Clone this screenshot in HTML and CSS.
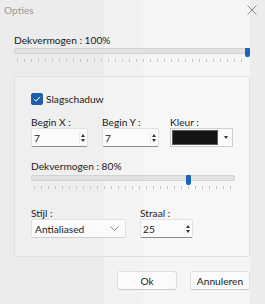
FILE: index.html
```html
<!DOCTYPE html>
<html lang="nl">
<head>
    <meta charset="UTF-8">
    <meta name="viewport" content="width=device-width, initial-scale=1.0">
    <title>Opties</title>
    <link rel="stylesheet" href="styles.css">
</head>
<body>

    <div class="window">
        <div class="titlebar">
            <span class="title">Opties</span>
            <svg class="close" width="10" height="10" viewBox="0 0 10 10">
                <path d="M0.5 0.5 L9.5 9.5 M9.5 0.5 L0.5 9.5" stroke="#8a8a8a" stroke-width="1" fill="none"/>
            </svg>
        </div>

        <div class="content">
            <div class="label">Dekvermogen : 100%</div>
            <div class="slider main-slider">
                <div class="track"></div>
                <div class="thumb" style="left: 100%"></div>
                <div class="ticks"></div>
            </div>

            <div class="group">
                <label class="check">
                    <span class="box">
                        <svg width="8" height="8" viewBox="0 0 8 8">
                            <path d="M1 4.2 L3 6.2 L7 1.8" stroke="#fff" stroke-width="1" fill="none"/>
                        </svg>
                    </span>
                    Slagschaduw
                </label>

                <div class="row">
                    <div class="field fx">
                        <div class="label">Begin X :</div>
                        <div class="spin w-spin">
                            <span class="value">7</span>
                            <span class="arrows"><i class="up"></i><i class="down"></i></span>
                        </div>
                    </div>
                    <div class="field fy">
                        <div class="label">Begin Y :</div>
                        <div class="spin w-spin">
                            <span class="value">7</span>
                            <span class="arrows"><i class="up"></i><i class="down"></i></span>
                        </div>
                    </div>
                    <div class="field">
                        <div class="label">Kleur :</div>
                        <div class="color-btn">
                            <span class="swatch"></span>
                            <i class="down"></i>
                        </div>
                    </div>
                </div>

                <div class="label sub-label">Dekvermogen : 80%</div>
                <div class="slider inner-slider">
                    <div class="track"></div>
                    <div class="thumb" style="left: 78.5%"></div>
                    <div class="ticks"></div>
                </div>

                <div class="row bottom-row">
                    <div class="field fs">
                        <div class="label">Stijl :</div>
                        <div class="combo">
                            <span class="value">Antialiased</span>
                            <svg width="9" height="5" viewBox="0 0 9 5">
                                <path d="M0.5 0.5 L4.5 4.5 L8.5 0.5" stroke="#8a8a8a" stroke-width="1" fill="none"/>
                            </svg>
                        </div>
                    </div>
                    <div class="field">
                        <div class="label">Straal :</div>
                        <div class="spin s-spin">
                            <span class="value">25</span>
                            <span class="arrows"><i class="up"></i><i class="down"></i></span>
                        </div>
                    </div>
                </div>
            </div>

            <div class="buttons">
                <button>Ok</button>
                <button>Annuleren</button>
            </div>
        </div>
    </div>

</body>
</html>
```

FILE: styles.css
```css
body {
    margin: 0;
    padding: 0;
    font-family: 'Lato', sans-serif;
    font-size: 10.2px;
    color: #1a1a1a;
}

.window {
    width: 265px;
    height: 304px;
    background-color: #ececec;
    background-image:
        linear-gradient(90deg, transparent 0, transparent 104px, rgba(255,255,255,0.3) 104px, rgba(255,255,255,0.3) 143px, rgba(255,255,255,0.5) 143px, rgba(255,255,255,0.5) 250px, transparent 250px);
    overflow: hidden;
}

.titlebar {
    height: 20px;
    display: flex;
    align-items: center;
    justify-content: space-between;
    padding: 0 8px 0 4px;
}

.title {
    color: #9a9a9a;
}

.content {
    padding: 13px 15px 0 14px;
}

.label {
    line-height: 14px;
    height: 14px;
}

.slider {
    position: relative;
    margin-top: 1px;
}

.track {
    height: 4px;
    margin-top: 1px;
    background-color: #e2e2e2;
    border: 1px solid #d2d2d2;
    border-radius: 2px;
}

.thumb {
    position: absolute;
    top: 0;
    width: 5px;
    height: 9px;
    margin-left: -5px;
    background-color: #1b64b4;
    border-radius: 1px 1px 2px 2px;
}

.ticks {
    height: 3px;
    margin: 5px 2px 0 3px;
    background-image: repeating-linear-gradient(90deg, #c4c4c4 0, #c4c4c4 1px, transparent 1px, transparent 7px);
}

.group {
    margin-top: 14px;
    height: 181px;
    border: 1px solid #e0e0e0;
    border-radius: 2px;
    padding: 15px 14px 0 16px;
    box-sizing: border-box;
    background-color: rgba(255,255,255,0.2);
}

.check {
    display: flex;
    align-items: center;
    gap: 3px;
    height: 14px;
}

.box {
    width: 12px;
    height: 12px;
    background-color: #1b5fab;
    border-radius: 2px;
    display: flex;
    align-items: center;
    justify-content: center;
}

.row {
    display: flex;
    margin-top: 10px;
}

.field .label {
    line-height: 12px;
    height: 12px;
}

.fx {
    margin-right: 14px;
}

.fy {
    margin-right: 11px;
}

.fs {
    margin-right: 14px;
}

.spin, .combo {
    height: 19px;
    background-color: #fbfbfb;
    border: 1px solid #e2e2e2;
    border-bottom-color: #8c8c8c;
    border-radius: 2px;
    box-sizing: border-box;
    display: flex;
    align-items: center;
    justify-content: space-between;
    padding: 0 1px 0 2px;
}

.w-spin {
    width: 57px;
}

.s-spin {
    width: 53px;
}

.arrows {
    display: flex;
    flex-direction: column;
    gap: 2px;
    padding: 2px 1px;
    border-left: 1px solid #ececec;
}

.up, .down {
    display: block;
    width: 0;
    height: 0;
    border-left: 2.5px solid transparent;
    border-right: 2.5px solid transparent;
}

.up {
    border-bottom: 3px solid #333;
}

.down {
    border-top: 3px solid #333;
}

.color-btn {
    width: 63px;
    height: 19px;
    box-sizing: border-box;
    border: 1px solid #cfcfcf;
    background-color: #fbfbfb;
    display: flex;
    align-items: center;
    padding: 1px;
}

.swatch {
    width: 46px;
    height: 15px;
    background-color: #151515;
    border: 1px solid #5a5a5a;
    box-sizing: border-box;
}

.color-btn .down {
    margin-left: 6px;
}

.sub-label {
    margin-top: 12px;
}

.inner-slider {
    margin-top: 0;
}

.inner-slider .thumb {
    height: 10px;
}

.inner-slider .track {
    margin-top: 2px;
}

.bottom-row {
    margin-top: 18px;
}

.combo {
    width: 95px;
    padding: 0 6px 0 3px;
    border-bottom-color: #cfcfcf;
}

.buttons {
    display: flex;
    justify-content: flex-end;
    gap: 13px;
    margin-top: 14px;
}

button {
    width: 60px;
    height: 19px;
    font-family: 'Lato', sans-serif;
    font-size: 10.2px;
    color: #1a1a1a;
    background-color: #fbfbfb;
    border: 1px solid #e0e0e0;
    border-bottom-color: #cccccc;
    border-radius: 3px;
    padding: 0;
}
```
